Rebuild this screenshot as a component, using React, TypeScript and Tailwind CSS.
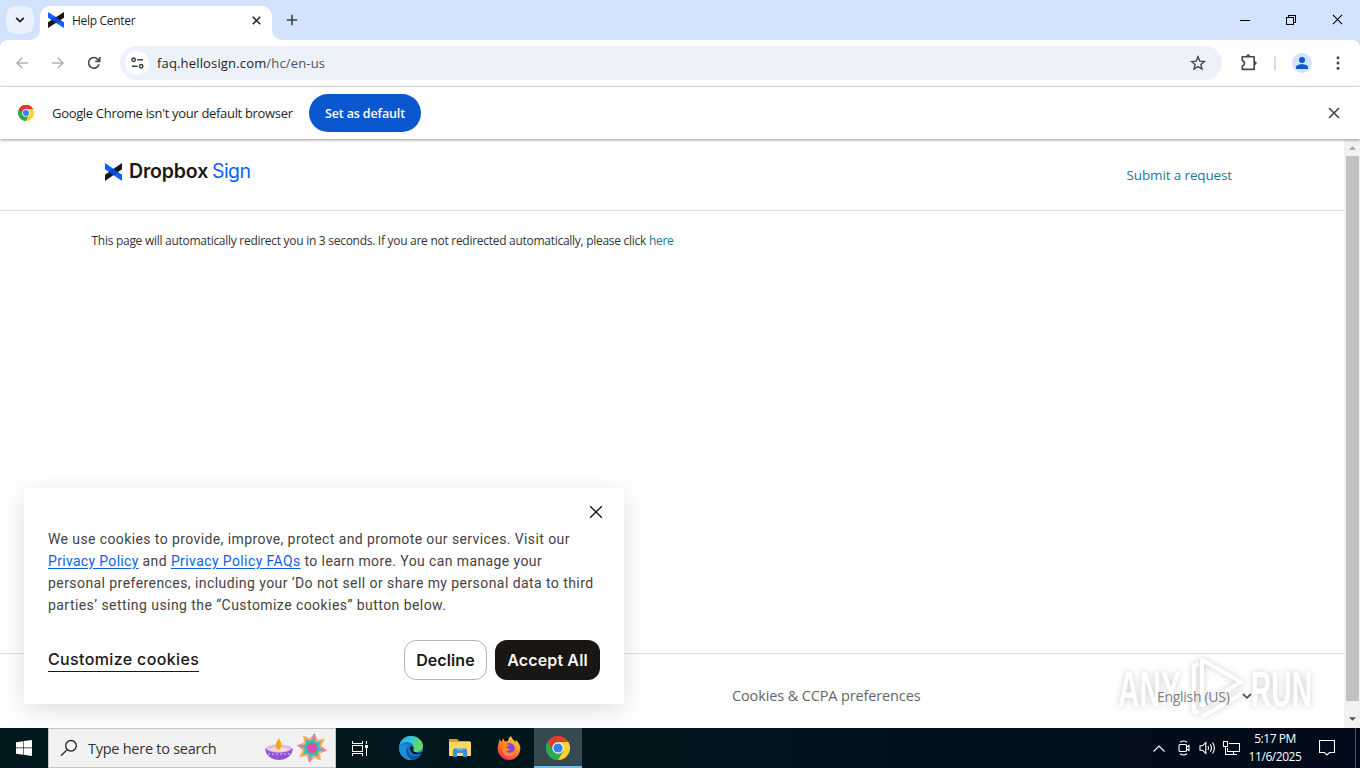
import React from 'react';

const UI_FONT = "font-['Open_Sans','Noto_Sans',sans-serif]";

const DropboxMark: React.FC<{ className?: string }> = ({ className }) => (
  <svg viewBox="0 0 16 17" preserveAspectRatio="none" className={className}>
    <path d="M0 0L16 11V17L0 6Z" fill="#0f5fff" />
    <path d="M16 0V6L0 17V11Z" fill="#1a1714" />
    <path d="M8 5.5L12.3 8.5L8 11.5L3.7 8.5Z" fill="#0a48d0" />
  </svg>
);

const ChromeLogo: React.FC<{ className?: string }> = ({ className }) => (
  <svg viewBox="0 0 24 24" className={className}>
    <path d="M12 12L1.6 6A12 12 0 0 1 22.4 6Z" fill="#e33b2e" />
    <path d="M12 12L1.6 6A12 12 0 0 0 12 24L17.2 15Z" fill="#2da94f" />
    <path d="M12 6H22.4A12 12 0 0 1 12 24L17.2 15Z" fill="#fdd231" />
    <path d="M1.6 6L6.8 15L12 12V6Z" fill="#2da94f" />
    <path d="M1.6 6A12 12 0 0 1 22.4 6H12A6 6 0 0 0 6.8 9L5.8 13.2Z" fill="#e33b2e" />
    <path d="M1.6 6L6.8 15L5 17L0.6 8.5Z" fill="#2da94f" />
    <circle cx="12" cy="12" r="5.7" fill="#fff" />
    <circle cx="12" cy="12" r="4.6" fill="#3b7ded" />
  </svg>
);

const CrossIcon: React.FC<{ className?: string; width?: number }> = ({ className, width = 1.5 }) => (
  <svg viewBox="0 0 12 12" fill="none" stroke="currentColor" strokeWidth={width} className={className}>
    <path d="M1 1L11 11M11 1L1 11" />
  </svg>
);

const TabStrip: React.FC = () => (
  <div className="flex h-10 items-start bg-[#d3e3fd] pl-1.5 pt-1.5">
    <div className="flex h-7 w-7 items-center justify-center rounded-[10px] bg-[#e9f1fe]">
      <svg viewBox="0 0 10 6" className="h-1.5 w-2.5" fill="none" stroke="#1f1f1f" strokeWidth="1.8">
        <path d="M1.2 .8L5 4.6L8.8 .8" />
      </svg>
    </div>
    <div className="relative ml-1.5 flex h-[34px] w-[232px] items-center rounded-t-[10px] bg-white pb-1.5 pl-2 pr-[11px]">
      <svg viewBox="0 0 10 10" className="absolute -left-2.5 bottom-0 h-2.5 w-2.5" fill="#fff">
        <path d="M10 0V10H0A10 10 0 0 0 10 0Z" />
      </svg>
      <svg viewBox="0 0 10 10" className="absolute -right-2.5 bottom-0 h-2.5 w-2.5" fill="#fff">
        <path d="M0 0V10H10A10 10 0 0 1 0 0Z" />
      </svg>
      <DropboxMark className="h-4 w-4" />
      <span className="ml-2 flex-1 pt-0.5 text-[12px] tracking-[-0.3px] text-[#1f1f1f]">Help Center</span>
      <CrossIcon className="h-[9px] w-[9px] text-[#1f1f1f]" width={2} />
    </div>
    <svg viewBox="0 0 12 12" className="ml-3.5 mt-2 h-3 w-3" stroke="#3c4043" strokeWidth="1.6">
      <path d="M6 .8V11.2M.8 6H11.2" />
    </svg>
    <div className="ml-auto flex items-center pr-[17px] pt-2">
      <svg viewBox="0 0 10 10" className="mr-9 h-2.5 w-2.5" shapeRendering="crispEdges">
        <path d="M0 5.5H10" stroke="#000" />
      </svg>
      <svg viewBox="0 0 10 10" className="mr-9 h-2.5 w-2.5" fill="none" stroke="#000" shapeRendering="crispEdges">
        <path d="M.5 2.5H7.5V9.5H.5ZM2.5 2.5V.5H9.5V7.5H7.5" />
      </svg>
      <CrossIcon className="h-[11px] w-[11px] text-black" width={1.1} />
    </div>
  </div>
);

const Toolbar: React.FC = () => (
  <div className="bg-[#d3e3fd]">
    <div className="flex h-[47px] items-center rounded-t-lg border-b border-[#e1e3e6] bg-white pl-4 pr-[15px]">
      <svg viewBox="0 0 12 12" className="h-3 w-3" fill="none" stroke="#b1b3b5" strokeWidth="1.5">
        <path d="M12 6H1.2M6.2 .8L1 6L6.2 11.2" />
      </svg>
      <svg viewBox="0 0 12 12" className="ml-6 h-3 w-3" fill="none" stroke="#b1b3b5" strokeWidth="1.5">
        <path d="M0 6H10.8M5.8 .8L11 6L5.8 11.2" />
      </svg>
      <svg viewBox="0 0 14 14" className="ml-[23px] h-3.5 w-3.5" fill="none" stroke="#474747" strokeWidth="1.6">
        <path d="M12 8.2A5.3 5.3 0 1 1 10.9 3.4L12.6 5.2M12.7 1V5.4H8.3" />
      </svg>
      <div className="ml-[19px] flex h-[34px] w-[1102px] items-center rounded-full bg-[#edf1fa] pl-[5px] pr-4">
        <div className="flex h-6 w-6 items-center justify-center rounded-full bg-white">
          <svg viewBox="0 0 13 12" className="h-3 w-[13px]" fill="none" stroke="#3c4043" strokeWidth="1.5">
            <circle cx="2.6" cy="2.8" r="1.7" />
            <path d="M6.3 2.8H12M.8 9.2H6.6" />
            <circle cx="10.2" cy="9.2" r="1.7" />
          </svg>
        </div>
        <span className="ml-2 flex-1 pt-0.5 text-[13px] tracking-[0.16px] text-[#1f1f1f]">
          faq.hellosign.com<span className="text-[#50545a]">/hc/en-us</span>
        </span>
        <svg viewBox="0 0 16 16" className="h-4 w-4" fill="none" stroke="#474747" strokeWidth="1.4">
          <path d="M8 1.8L9.8 6.1L14.4 6.5L10.9 9.5L12 14L8 11.6L4 14L5.1 9.5L1.6 6.5L6.2 6.1Z" />
        </svg>
      </div>
      <svg viewBox="0 0 18 18" className="ml-[18px] h-[18px] w-[18px]" fill="none" stroke="#474747" strokeWidth="1.6">
        <path d="M2.3 2.8H14.2V15.4H2.3V12C5.2 11.4 5.2 7.2 2.3 6.6Z" strokeLinejoin="round" />
        <path d="M6.3 2.2A1.9 1.9 0 0 1 10.1 2.2ZM14.8 7.2A1.9 1.9 0 0 1 14.8 11Z" fill="#474747" stroke="none" />
      </svg>
      <div className="ml-4 h-3.5 w-0.5 bg-[#d3dcf0]" />
      <div className="ml-4 flex h-5 w-5 items-center justify-center rounded-full bg-[#d3e3fd]">
        <svg viewBox="0 0 12 12" className="h-3 w-3" fill="#0b57d0">
          <circle cx="6" cy="3" r="3" />
          <path d="M0 12V10.2C0 8.4 3 7.2 6 7.2S12 8.4 12 10.2V12Z" />
        </svg>
      </div>
      <svg viewBox="0 0 4 14" className="ml-auto mr-[5px] h-3.5 w-1" fill="#474747">
        <circle cx="2" cy="1.8" r="1.5" />
        <circle cx="2" cy="7" r="1.5" />
        <circle cx="2" cy="12.2" r="1.5" />
      </svg>
    </div>
  </div>
);

const DefaultBrowserBar: React.FC = () => (
  <div className="relative z-10 flex h-[52px] items-center bg-white pl-[18px] pr-5 shadow-[0_1px_3px_rgba(0,0,0,0.4)]">
    <ChromeLogo className="h-4 w-4" />
    <span className="ml-[18px] w-[257px] whitespace-nowrap pt-0.5 text-[13px] tracking-[-0.32px] text-[#1f1f1f]">
      Google Chrome isn't your default browser
    </span>
    <button className="h-[38px] w-28 rounded-full bg-[#0b57d0] pt-0.5 text-[12.5px] font-semibold tracking-[-0.15px] text-white">
      Set as default
    </button>
    <CrossIcon className="ml-auto h-3 w-3 text-[#474747]" width={1.6} />
  </div>
);

const CookieDialog: React.FC = () => (
  <div className="absolute left-6 top-[349px] h-[216px] w-[600px] bg-white px-6 text-[#1a1918] shadow-[0_6px_24px_rgba(0,0,0,0.13)]">
    <div className="flex h-10 items-start justify-end pt-[17px]">
      <CrossIcon className="-mr-[3px] h-3.5 w-3.5" width={1.2} />
    </div>
    <p className="whitespace-nowrap font-['Roboto',sans-serif] text-[14px] leading-[22px] text-[#444342]">
      <span className="tracking-[0.4px]">We use cookies to provide, improve, protect and promote our services. Visit our</span>
      <br />
      <span className="tracking-[0.4px]">
        <a className="tracking-[0.32px] text-[#0d5fe8] underline underline-offset-2">Privacy Policy</a> and{' '}
        <a className="text-[#0d5fe8] underline underline-offset-2">Privacy Policy FAQs</a> to learn more. You can manage your
      </span>
      <br />
      <span className="tracking-[0.43px]">personal preferences, including your ‘Do not sell or share my personal data to third</span>
      <br />
      <span className="tracking-[0.44px]">parties’ setting using the “Customize cookies” button below.</span>
    </p>
    <div className="mt-6 flex h-10 items-center font-['Inter',sans-serif] text-[16px] font-semibold">
      <a className="mr-auto flex h-6 items-center border-b border-[#1a1918] pb-0.5 font-medium tracking-[0.36px]">Customize cookies</a>
      <button className="h-10 w-[83px] rounded-xl border border-[#b5b3b0] tracking-[0.1px]">Decline</button>
      <button className="ml-2 h-10 w-[105px] rounded-xl bg-[#1a1613] tracking-[0.15px] text-[#f7f5f2]">Accept All</button>
    </div>
  </div>
);

const Watermark: React.FC = () => (
  <svg viewBox="0 0 230 74" className="absolute left-[1110px] top-[514px] h-[74px] w-[230px] opacity-60 drop-shadow-[0_0_3px_rgba(0,0,0,0.35)]">
    <g fill="#fff" fontFamily="Liberation Sans, sans-serif" fontSize="50" fontWeight="700">
      <text x="8" y="54" textLength="63" lengthAdjust="spacingAndGlyphs">ANY</text>
      <text x="141" y="54" textLength="61" lengthAdjust="spacingAndGlyphs">RUN</text>
    </g>
    <g fill="none" stroke="#fff" strokeWidth="4" strokeLinejoin="round">
      <path d="M92 7L131 29L92 52Z" />
      <path d="M89 11L84 13V59H89M92 64L133 40" />
    </g>
  </svg>
);

const Scrollbar: React.FC = () => (
  <div className="flex w-4 flex-col items-center justify-between bg-[#f1f1f1]">
    <svg viewBox="0 0 8 4" className="mt-[7px] h-1 w-[7px]" fill="#a3a3a3">
      <path d="M0 4L4 0L8 4Z" />
    </svg>
    <div className="mb-2.5 mt-1.5 w-[13px] flex-1 bg-[#c1c1c1]" />
    <svg viewBox="0 0 8 4" className="mb-[7px] mt-1.5 h-1 w-[7px]" fill="#505050">
      <path d="M0 0L4 4L8 0Z" />
    </svg>
  </div>
);

const HelpPage: React.FC = () => (
  <div className="relative flex h-[589px] bg-white">
    <div className="flex w-[1344px] flex-col">
      <header className="flex h-[72px] items-center justify-between border-b border-[#ddd] pl-[105px] pr-28">
        <div className="flex items-center pb-1.5">
          <DropboxMark className="h-[18px] w-[17px]" />
          <span className="ml-[7px] font-['Inter',sans-serif] text-[19.5px] font-semibold tracking-[-0.15px] text-[#1a1714]">
            Dropbox <span className="-ml-px font-normal tracking-[-0.5px] text-[#0f5fff]">Sign</span>
          </span>
        </div>
        <a className="pt-0.5 text-[13.5px] tracking-[-0.14px] text-[#17789a]">Submit a request</a>
      </header>
      <p className="flex-1 whitespace-nowrap pl-[91.5px] pt-[21px] text-[12px] tracking-[-0.28px] text-[#333]">
        This page will automatically redirect you in 3 seconds. If you are not redirected automatically, please click{' '}
        <a className="text-[#17789a]">here</a>
      </p>
      <footer className="relative z-10 flex h-[75px] items-center border-t border-[#ddd] pt-2.5">
        <span className="ml-[732px] w-[425px] text-[14.5px] tracking-[-0.13px] text-[#666]">Cookies &amp; CCPA preferences</span>
        <span className="w-[85px] text-[14px] tracking-[-0.3px] text-[#808080]">English (US)</span>
        <svg viewBox="0 0 10 6" className="h-1.5 w-2.5" fill="none" stroke="#555" strokeWidth="1.8">
          <path d="M1 1L5 4.8L9 1" />
        </svg>
      </footer>
    </div>
    <Scrollbar />
    <Watermark />
    <div className="absolute inset-0 z-20">
      <CookieDialog />
    </div>
  </div>
);

const SearchHighlight: React.FC = () => (
  <svg viewBox="0 0 64 34" className="h-[34px] w-16">
    <ellipse cx="15" cy="18" rx="13.5" ry="4.5" fill="#d9b8f4" />
    <path d="M1 17C2 33 28 33 29 17C25 23 5 23 1 17Z" fill="#8f55d4" />
    <ellipse cx="15" cy="18.5" rx="9.5" ry="2.6" fill="#f5d5ce" />
    <path d="M14.5 19C9 15 13 11 15 7C17 12 20 15 14.5 19Z" fill="#f7a51c" />
    <path d="M4 23L26 23" stroke="#b98aea" strokeWidth="2" strokeDasharray="2 2" />
    {[0, 45, 90, 135, 180, 225, 270, 315].map((angle, index) => (
      <g key={angle} transform={`rotate(${angle + 10} 48 17)`}>
        <path d="M43.5 10L48 1.5L52.5 10Z" fill={index % 2 === 0 ? '#ef7f9b' : '#f5ad52'} />
      </g>
    ))}
    <circle cx="48" cy="17" r="10" fill="#f3b44f" />
    {[0, 45, 90, 135, 180, 225, 270, 315].map((angle) => (
      <path key={angle} d="M45 11L48 6L51 11Z" fill="#42b9c6" transform={`rotate(${angle + 10} 48 17)`} />
    ))}
    <circle cx="48" cy="17" r="7.5" fill="#3fb5c4" />
    <circle cx="48" cy="17" r="5" fill="#e84d91" />
    <circle cx="48" cy="17" r="2" fill="#b957cf" />
  </svg>
);

const EdgeIcon: React.FC = () => (
  <svg viewBox="0 0 24 24" className="h-6 w-6">
    <defs>
      <linearGradient id="edge-top" x1="0" y1="0" x2="1" y2=".3">
        <stop offset="0" stopColor="#27a8e5" />
        <stop offset=".5" stopColor="#35c5d8" />
        <stop offset="1" stopColor="#65dc5a" />
      </linearGradient>
    </defs>
    <circle cx="12" cy="12" r="12" fill="#1479c9" />
    <path d="M0 11C1 3 7 0 12 0C19 0 24 5 24 10C24 14 20 16 17 16C14 16 13.5 15 14.3 13.5C16 9 12 6 8.5 6C4 6 1 8.5 0 11Z" fill="url(#edge-top)" />
    <path d="M9 9C6 12 6 19 13 23.8C6 25 0 19 0 12C2 8 6 7.5 9 9Z" fill="#1b8fda" />
    <path d="M11 10C7 13 9 20 16 20C19 20 21.5 18.7 22.4 18C20 22 17 23.5 14 24C7 22 5 13 11 10Z" fill="#11529c" />
    <path d="M12 10C10 12 11 16 15 18C18 19 21 18 24 16V20L21 20C22 19 23 17 22.5 16C19 18 14 16 14.2 13.7C15 12.5 14 10 12 10Z" fill="#02171f" />
  </svg>
);

const FolderIcon: React.FC = () => (
  <svg viewBox="0 0 22 18" className="h-[18px] w-[22px]">
    <path d="M0 0H8L10 2H21V6H0Z" fill="#e69b1e" />
    <path d="M0 3H22V17H0Z" fill="#fbd769" />
    <path d="M4 18V11Q4 9.5 5.5 9.5H16.5Q18 9.5 18 11V18H14V14H8V18Z" fill="#3e8fc9" />
    <path d="M8 9.5H14V11.5H8Z" fill="#68b8e8" />
  </svg>
);

const FirefoxIcon: React.FC = () => (
  <svg viewBox="0 0 24 24" className="h-6 w-6">
    <defs>
      <linearGradient id="fox-body" x1=".8" y1="0" x2=".2" y2="1">
        <stop offset="0" stopColor="#ffe03d" />
        <stop offset=".45" stopColor="#ff8a24" />
        <stop offset="1" stopColor="#f5206d" />
      </linearGradient>
    </defs>
    <path d="M2.5 3L4.5 6L6 2.5L8 5.5L11 5C11.5 2 13 1 14 0C15 3 17 4 18.5 6L19 4C22 7 23.5 10 23.3 13C23 19 18 24 12 24C6 24 .7 19 .7 13C.7 9 2 7 2.5 3Z" fill="url(#fox-body)" />
    <circle cx="12.4" cy="12.5" r="5.4" fill="#8046d9" />
    <path d="M5 9C8 7 11 8 12.5 10C10 10 9 11 9.5 12L13 13C12 15 10 15 9 15.5C12 18 17 17 18 13C19 19 14 21 10 20C6 19 4 14 5 9Z" fill="#ff8a24" />
  </svg>
);

const Taskbar: React.FC = () => (
  <div className="flex h-10 items-center bg-linear-to-r from-[#02191f] via-[#02151d] via-50% to-[#010a1a] text-white">
    <div className="flex w-12 justify-center">
      <svg viewBox="0 0 16 16" className="h-4 w-4" fill="#fff">
        <path d="M0 2.2L7.2 1.2V7.6H0ZM7.8 1.1L16 0V7.6H7.8ZM0 8.2H7.2V14.7L0 13.7ZM7.8 8.2H16V16L7.8 14.8Z" />
      </svg>
    </div>
    <div className="flex h-10 w-72 items-center border border-[#c4c8c9] bg-[#f2f2f2] pl-[11px] pr-[7px]">
      <svg viewBox="0 0 18 18" className="h-[18px] w-[18px]" fill="none" stroke="#222" strokeWidth="1.3">
        <circle cx="11" cy="6.8" r="5.3" />
        <path d="M7.2 10.6L1 16.8" />
      </svg>
      <span className="ml-2.5 flex-1 whitespace-nowrap pt-0.5 text-[14.5px] tracking-[-0.26px] text-[#333]">Type here to search</span>
      <SearchHighlight />
    </div>
    <div className="flex w-12 justify-center">
      <svg viewBox="0 0 18 16" className="h-4 w-[18px]" fill="none" stroke="#fff" shapeRendering="crispEdges">
        <path d="M1.5 1V3.5H11.5V1M1.5 5.5H11.5V11.5H1.5ZM1.5 16V13.5H11.5V16M15.5 1V4M15.5 8V16" />
        <path d="M14 5H17V8H14Z" fill="#fff" stroke="none" />
      </svg>
    </div>
    <div className="ml-[3px] flex w-12 justify-center"><EdgeIcon /></div>
    <div className="ml-px flex w-12 justify-center"><FolderIcon /></div>
    <div className="ml-px flex w-12 justify-center"><FirefoxIcon /></div>
    <div className="ml-px flex h-10 w-12 items-center justify-center border-b-2 border-[#76b9ed] bg-[#354951] pt-0.5">
      <ChromeLogo className="h-6 w-6" />
    </div>
    <div className="ml-auto flex items-center">
      <svg viewBox="0 0 12 7" className="h-[7px] w-3" fill="none" stroke="#fff" strokeWidth="1.2">
        <path d="M.5 6.5L6 1L11.5 6.5" />
      </svg>
      <svg viewBox="0 0 14 16" className="ml-3 h-4 w-3.5" fill="none" stroke="#fff" strokeWidth="1.1">
        <rect x="2" y="4.5" width="7.5" height="7" rx="1" />
        <path d="M9.5 7L12 5.5V10.5L9.5 9M3 2.2Q6.5 -.2 10 2.2M3 13.8Q6.5 16.2 10 13.8" />
      </svg>
      <svg viewBox="0 0 18 14" className="ml-2 h-3.5 w-[18px]" fill="none" stroke="#fff" strokeWidth="1.1">
        <path d="M1 4.8H3.5L6.8 1.5V12.5L3.5 9.2H1ZM9 5Q10.3 7 9 9M11.3 3.3Q13.7 7 11.3 10.7M13.6 1.6Q17.2 7 13.6 12.4" />
      </svg>
      <svg viewBox="0 0 17 14" className="ml-1.5 h-3.5 w-[17px]" fill="none" stroke="#fff" shapeRendering="crispEdges">
        <path d="M6 2.5H16.5V10.5H4.5V7M.5 .5H4.5V5.5H.5ZM2.5 5.5V13.5H8M10.5 10.5V13.5M7 13.5H14" />
      </svg>
      <div className="ml-[3px] w-16 whitespace-nowrap text-center text-[12px] leading-[18px] tracking-[-0.45px]">
        <div>5:17 PM</div>
        <div>11/6/2025</div>
      </div>
      <svg viewBox="0 0 16 16" className="ml-3 h-4 w-4" fill="none" stroke="#fff" strokeWidth="1.1">
        <path d="M.5 .5H15.5V12.5H10.5L8 15L5.5 12.5H.5Z" />
      </svg>
      <div className="ml-5 h-10 w-px bg-[#4a5360]" />
      <div className="w-1" />
    </div>
  </div>
);

const App: React.FC = () => (
  <div className={`flex h-[768px] w-[1360px] flex-col overflow-hidden bg-white ${UI_FONT}`}>
    <TabStrip />
    <Toolbar />
    <DefaultBrowserBar />
    <HelpPage />
    <Taskbar />
  </div>
);

export default App;
